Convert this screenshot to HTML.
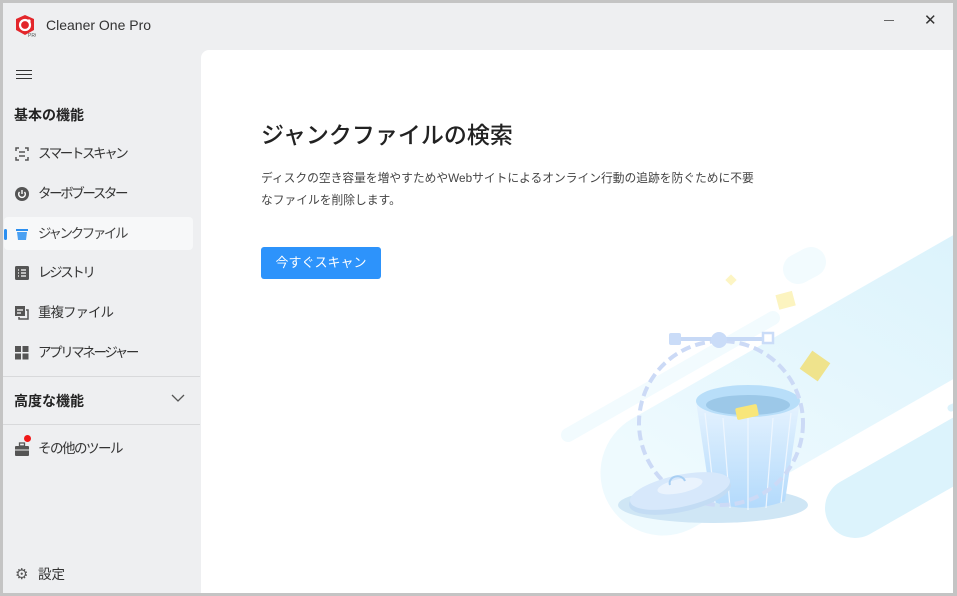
<!DOCTYPE html><html><head><meta charset="utf-8"><style>
*{margin:0;padding:0;box-sizing:border-box}
body{width:957px;height:596px;background:#c4c4c4;position:relative;overflow:hidden;font-family:"Liberation Sans","Noto Sans CJK JP",sans-serif}
#win{position:absolute;left:3px;top:3px;width:950px;height:590px;background:#eeeff1}
.t{position:absolute;white-space:nowrap}
.nav{position:absolute;left:12px;font-size:13.5px;color:#333;height:20px;line-height:20px;white-space:nowrap;width:180px;letter-spacing:-2.4px}
.nav .ic{position:absolute;left:0;top:3px;width:14px;height:14px}
.nav span{position:absolute;left:23px;white-space:nowrap}
#main{position:absolute;left:198px;top:47px;width:752px;height:543px;background:#fff;border-top-left-radius:8px;overflow:hidden}
</style></head><body><div id="win">
<svg class="t" style="left:11px;top:11px" width="22" height="24" viewBox="0 0 22 24"><path d="M11 1 L20 5 L20 16 L11 21 L2 16 L2 5Z" fill="#e3262b"/><circle cx="11" cy="11" r="5" fill="none" stroke="#fff" stroke-width="2.2"/><circle cx="15" cy="7" r="1.6" fill="#fff"/><text x="14" y="23" font-size="5" fill="#555">PRO</text></svg>
<div class="t" style="left:43px;top:14px;font-size:14px;color:#333">Cleaner One Pro</div>
<div class="t" style="left:881px;top:17px;width:10px;height:1px;background:#666"></div>
<div class="t" style="left:921px;top:8px;font-size:15px;color:#333">✕</div>
<div class="t" style="left:13px;top:67px;width:16px;height:1.4px;background:#333;box-shadow:0 4px 0 #333,0 8px 0 #333"></div>
<div class="t" style="left:11px;top:102px;font-size:14px;font-weight:bold;color:#222">基本の機能</div>
<div class="nav" style="top:141px"><svg class="ic" viewBox="0 0 14 14" fill="none" stroke="#555" stroke-width="1.5"><path d="M1 4V1H4M10 1H13V4M13 10V13H10M4 13H1V10M4 5H10M4 9H10"/></svg><span>スマートスキャン</span></div>
<div class="nav" style="top:181px"><svg class="ic" viewBox="0 0 14 14"><circle cx="7" cy="7" r="7" fill="#555"/><path d="M7 3V7M4.5 5A3.3 3.3 0 1 0 9.5 5" stroke="#fff" stroke-width="1.4" fill="none"/></svg><span>ターボブースター</span></div>
<div class="t" style="left:1px;top:214px;width:189px;height:33px;background:#f7f8f9;border-radius:4px"></div>
<div class="t" style="left:1px;top:226px;width:3px;height:11px;background:#2b8ff0;border-radius:2px"></div>
<div class="nav" style="top:221px;color:#444"><svg class="ic" viewBox="0 0 14 14"><rect x="1" y="2" width="12" height="2" fill="#2b8ff0"/><path d="M2 5H12L11 13H3Z" fill="#4aa0f2"/></svg><span>ジャンクファイル</span></div>
<div class="nav" style="top:260px"><svg class="ic" viewBox="0 0 14 14"><rect width="14" height="14" rx="1.5" fill="#555"/><path d="M3 4H4M6 4H11M3 7H4M6 7H11M3 10H4M6 10H11" stroke="#fff" stroke-width="1.3"/></svg><span>レジストリ</span></div>
<div class="nav" style="top:300px;letter-spacing:-1px"><svg class="ic" viewBox="0 0 14 14"><rect x="0" y="0" width="10" height="10" fill="#555"/><path d="M4 11V13H13V4H11" stroke="#555" stroke-width="1.5" fill="none"/><path d="M2 4H8M2 7H6" stroke="#fff" stroke-width="1.2"/></svg><span>重複ファイル</span></div>
<div class="nav" style="top:340px"><svg class="ic" viewBox="0 0 14 14" fill="#555"><rect width="6" height="6"/><rect x="7.5" width="6" height="6"/><rect y="7.5" width="6" height="6"/><rect x="7.5" y="7.5" width="6" height="6"/></svg><span>アプリマネージャー</span></div>
<div class="t" style="left:0;top:373px;width:197px;height:1px;background:#d8d9db"></div>
<div class="t" style="left:11px;top:388px;font-size:14px;font-weight:bold;color:#222">高度な機能</div>
<svg class="t" style="left:168px;top:391px" width="14" height="9"><path d="M1 1L7 7L13 1" stroke="#555" stroke-width="1.3" fill="none"/></svg>
<div class="t" style="left:0;top:421px;width:197px;height:1px;background:#d8d9db"></div>
<div class="nav" style="top:436px;letter-spacing:-1.5px"><svg class="ic" viewBox="0 0 14 14"><rect x="4.5" y="1" width="5" height="3" fill="none" stroke="#555" stroke-width="1.3"/><rect y="4" width="14" height="10" rx="1" fill="#555"/><path d="M0 8H14" stroke="#eee" stroke-width="1"/></svg><span>その他のツール</span></div>
<div class="t" style="left:21px;top:432px;width:7px;height:7px;border-radius:50%;background:#f01818"></div>
<div class="nav" style="top:562px;letter-spacing:0"><span style="left:0;top:0;font-size:15px;color:#555">⚙</span><span>設定</span></div>
<div id="main">
<svg class="t" style="left:0;top:0" width="752" height="543" viewBox="198 47 752 543">
<defs><linearGradient id="bg1" x1="0" y1="1" x2="1" y2="0"><stop offset="0" stop-color="#eefafe"/><stop offset="1" stop-color="#dcf3fc"/></linearGradient>
<linearGradient id="bin" x1="0" y1="0" x2="0" y2="1"><stop offset="0" stop-color="#e6f3fe"/><stop offset="1" stop-color="#b3dafc"/></linearGradient></defs>
<line x1="660" y1="470" x2="1010" y2="270" stroke="url(#bg1)" stroke-width="125" stroke-linecap="round"/>
<line x1="852" y1="505" x2="1010" y2="415" stroke="#dcf3fc" stroke-width="60" stroke-linecap="round"/>
<line x1="565" y1="432" x2="770" y2="315" stroke="#f2fbfe" stroke-width="14" stroke-linecap="round"/>
<line x1="795" y1="266" x2="808" y2="259" stroke="#f2fbfe" stroke-width="30" stroke-linecap="round"/>
<line x1="948" y1="405" x2="960" y2="400" stroke="#dcf3fc" stroke-width="7" stroke-linecap="round"/>
<rect x="724" y="273" width="8" height="8" fill="#fdf5c4" transform="rotate(45 728 277)"/>
<rect x="774" y="290" width="17" height="15" fill="#fcf4c0" transform="rotate(-15 782 297)"/>
<rect x="801" y="352" width="22" height="22" fill="#efe38c" transform="rotate(35 812 363)"/>
<ellipse cx="710" cy="502" rx="95" ry="18" fill="#cfe6f5"/>
<path d="M693 398 L708 498 Q745 512 782 498 L797 398Z" fill="url(#bin)"/>
<g stroke="#eef6fe" stroke-width="1.2"><line x1="720" y1="415" x2="727" y2="505"/><line x1="745" y1="415" x2="745" y2="507"/><line x1="770" y1="415" x2="763" y2="505"/><line x1="702" y1="410" x2="712" y2="500"/><line x1="788" y1="410" x2="778" y2="500"/></g>
<ellipse cx="745" cy="398" rx="52" ry="16" fill="#b8def9"/>
<ellipse cx="745" cy="402" rx="42" ry="10" fill="#9cc8e8"/>
<rect x="733" y="403" width="22" height="12" rx="2" fill="#f8e67a" transform="rotate(-12 744 409)"/>
<circle cx="718" cy="420" r="82" fill="none" stroke="#ccdaf6" stroke-width="4" stroke-dasharray="10 5"/>
<line x1="672" y1="336" x2="765" y2="336" stroke="#c7d9f6" stroke-width="4"/>
<circle cx="716" cy="337" r="8" fill="#cadcf8"/>
<rect x="666" y="330" width="12" height="12" rx="2" fill="#cadcf8"/>
<rect x="760" y="330" width="10" height="10" fill="#fff" stroke="#cadcf8" stroke-width="2.5"/>
<ellipse cx="677" cy="492" rx="52" ry="17" fill="#c3dcf4" transform="rotate(-12 677 492)"/>
<ellipse cx="677" cy="488" rx="51" ry="16" fill="#d7e8fb" transform="rotate(-12 677 488)"/>
<ellipse cx="677" cy="483" rx="23" ry="7" fill="#eaf3fd" transform="rotate(-12 677 483)"/>
<path d="M667 482 A7 6 0 0 1 682 478" stroke="#a8cff3" stroke-width="2" fill="none"/>
</svg>
<div class="t" style="left:60px;top:66px;font-size:23px;color:#222;font-weight:500">ジャンクファイルの検索</div>
<div class="t" style="left:60px;top:118px;font-size:11.75px;color:#444;line-height:22px">ディスクの空き容量を増やすためやWebサイトによるオンライン行動の追跡を防ぐために不要<br>なファイルを削除します。</div>
<div class="t" style="left:60px;top:197px;width:120px;height:32px;background:#2d93fb;border-radius:3px;color:#fff;font-size:13px;text-align:center;line-height:32px">今すぐスキャン</div>
</div>
</div></body></html>
